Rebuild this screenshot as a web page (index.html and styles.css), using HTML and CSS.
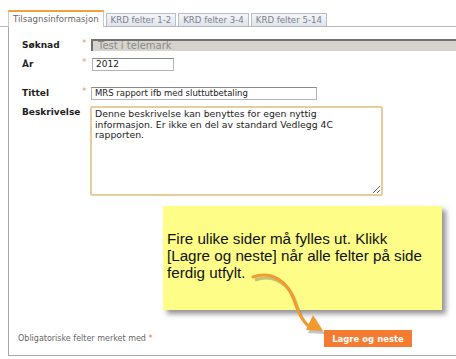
FILE: index.html
```html
<!DOCTYPE html>
<html lang="no">
<head>
    <meta charset="UTF-8">
    <title>Tilsagnsinformasjon</title>
    <link rel="stylesheet" href="styles.css">
</head>
<body>
    <div class="tabs">
        <div class="tab active">Tilsagnsinformasjon</div>
        <div class="tab">KRD felter 1-2</div>
        <div class="tab">KRD felter 3-4</div>
        <div class="tab">KRD felter 5-14</div>
    </div>

    <div class="panel">
        <div class="form">
            <label class="label">Søknad</label>
            <span class="req">*</span>
            <div class="field field-locked">Test i telemark</div>

            <label class="label">År</label>
            <span class="req">*</span>
            <div class="field field-year">2012</div>

            <label class="label gap">Tittel</label>
            <span class="req gap">*</span>
            <div class="field field-title gap">MRS rapport ifb med sluttutbetaling</div>

            <label class="label">Beskrivelse</label>
            <span></span>
            <textarea class="description" wrap="off" spellcheck="false">Denne beskrivelse kan benyttes for egen nyttig
informasjon. Er ikke en del av standard Vedlegg 4C
rapporten.</textarea>
        </div>

        <div class="callout">
            Fire ulike sider må fylles ut. Klikk<br>
            [Lagre og neste] når alle felter på side<br>
            ferdig utfylt.
        </div>

        <div class="footer">
            <span class="note">Obligatoriske felter merket med <span class="note-star">*</span></span>
            <button class="save-btn">Lagre og neste</button>
        </div>
    </div>

    <!-- pointer from the callout down to the button -->
    <svg class="arrow" width="456" height="359" viewBox="0 0 456 359">
        <g transform="translate(2,3)" opacity="0.35">
            <path d="M253,277 C272,270 288,282 294,300 C299,315 304,324 311,327" fill="none" stroke="#555" stroke-width="3"/>
            <polygon points="313,315 323,331 306,330" fill="#555"/>
        </g>
        <path d="M253,277 C272,270 288,282 294,300 C299,315 304,324 311,327" fill="none" stroke="#f29a2e" stroke-width="3" stroke-linecap="round"/>
        <polygon points="313,315 323,331 306,330" fill="#f29a2e"/>
    </svg>
</body>
</html>
```

FILE: styles.css
```css
body {
    margin: 0;
    width: 456px;
    height: 359px;
    overflow: hidden;
    position: relative;
    background: #fff;
    font-family: "DejaVu Sans", Verdana, sans-serif;
    color: #222;
}

.tabs {
    display: flex;
    align-items: flex-end;
    gap: 2px;
    padding: 10px 0 0 8px;
    border-bottom: 1px solid #b9b9b9;
}

.tab {
    font-size: 8.6px;
    color: #7b7f8c;
    padding: 0 4px;
    height: 12px;
    line-height: 12px;
    border: 1px solid #b8bdc8;
    border-bottom: none;
    background: linear-gradient(#f4f6fa, #dfe3eb);
}

.tab.active {
    height: 14px;
    line-height: 14px;
    color: #666;
    background: #fff;
    border-color: #c9c9c9;
    border-top: 2px solid #efa33c;
    margin-bottom: -1px;
    padding-bottom: 1px;
}

.panel {
    width: 448px;
    margin-left: 8px;
    box-sizing: border-box;
    overflow: hidden;
    border-left: 1px solid #a9a9a9;
    border-bottom: 1px solid #a9a9a9;
    padding: 12px 0 8px 0;
}

.form {
    display: grid;
    grid-template-columns: 60px 9px 1fr;
    row-gap: 6px;
    padding-left: 13px;
}

.label {
    font-size: 9px;
    font-weight: bold;
    line-height: 13px;
    color: #1e1e1e;
}

.req {
    font-size: 9px;
    line-height: 8px;
    color: #e69a68;
}

.gap {
    margin-top: 10px;
}

.field {
    height: 11px;
    font-size: 9px;
    line-height: 11px;
    padding: 0 3px;
    border: 1px solid #b4b4b4;
    border-top-color: #8a8a8a;
    box-sizing: content-box;
    white-space: nowrap;
}

.field-locked {
    width: 360px;
    height: 10px;
    line-height: 10px;
    font-size: 10px;
    color: #8a8a8a;
    background: #d6d3ce;
    border: none;
    border-top: 2px solid #707070;
    border-left: 2px solid #707070;
    padding-left: 5px;
}

.field-year {
    width: 74px;
    margin-left: 1px;
}

.field-title {
    width: 218px;
    font-size: 8.5px;
}

.description {
    display: block;
    width: 283px;
    height: 84px;
    margin: 0 0 0 -1px;
    padding: 1px 3px;
    font-family: "DejaVu Sans", Verdana, sans-serif;
    font-size: 9.3px;
    line-height: 10.5px;
    color: #222;
    border: 2px solid #e7cd9b;
    border-radius: 2px;
    resize: both;
    overflow: hidden;
    outline: none;
}

.callout {
    width: 275px;
    height: 80px;
    margin: 10px 0 0 154px;
    padding: 24px 0 0 4px;
    background: #fdfd88;
    box-shadow: 4px 4px 5px rgba(60, 60, 60, 0.55);
    font-family: "Liberation Sans", Arial, sans-serif;
    font-size: 15.2px;
    line-height: 17px;
    color: #111;
}

.footer {
    display: flex;
    align-items: center;
    width: 394px;
    margin-top: 20px;
    padding-left: 9px;
}

.note {
    font-size: 8px;
    color: #666;
}

.note-star {
    color: #e8722c;
}

.save-btn {
    margin-left: auto;
    height: 17px;
    width: 88px;
    padding: 0;
    border: none;
    background: #f47b30;
    color: #fff;
    font-family: "DejaVu Sans", Verdana, sans-serif;
    font-size: 8.5px;
    font-weight: bold;
}

.arrow {
    position: absolute;
    left: 0;
    top: 0;
    pointer-events: none;
}
```
